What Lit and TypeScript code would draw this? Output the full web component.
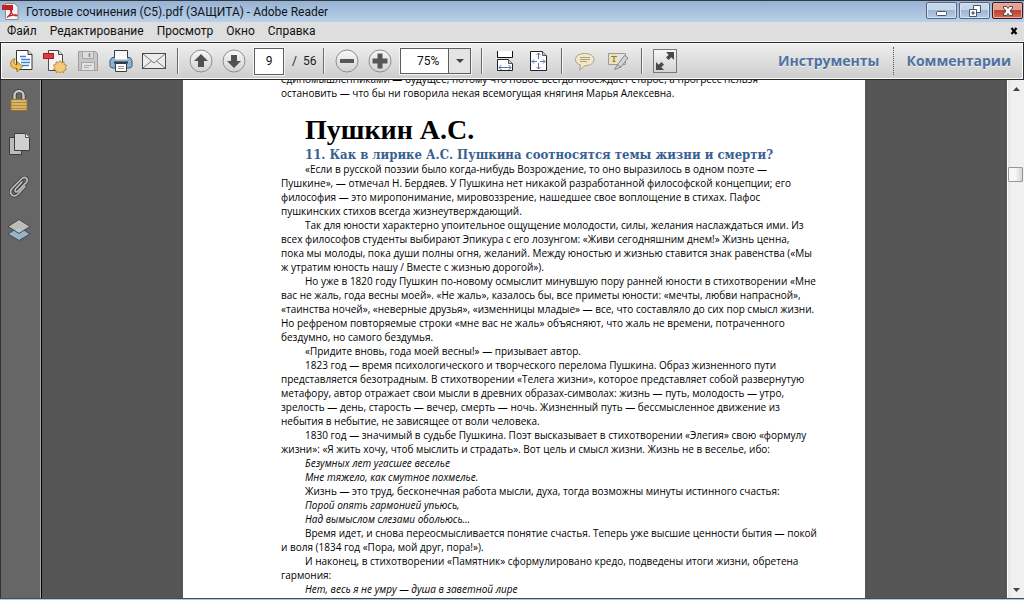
import { LitElement, html, css, svg } from "lit";
import { customElement, property, state } from "lit/decorators.js";

type Block = { verse?: boolean; cont?: boolean; lines: string[] };

const MENUS = ["Файл", "Редактирование", "Просмотр", "Окно", "Справка"];

const INTRO: Block = {
  cont: true,
  lines: [
    "единомышленниками — будущее, потому что новое всегда побеждает старое, а прогресс нельзя",
    "остановить — что бы ни говорила некая всемогущая княгиня Марья Алексевна.",
  ],
};

const BLOCKS: Block[] = [
  { lines: [
    "«Если в русской поэзии было когда-нибудь Возрождение, то оно выразилось в одном поэте —",
    "Пушкине», — отмечал Н. Бердяев. У Пушкина нет никакой разработанной философской концепции; его",
    "философия — это миропонимание, мировоззрение, нашедшее свое воплощение в стихах. Пафос",
    "пушкинских стихов всегда жизнеутверждающий.",
  ] },
  { lines: [
    "Так для юности характерно упоительное ощущение молодости, силы, желания наслаждаться ими. Из",
    "всех философов студенты выбирают Эпикура с его лозунгом: «Живи сегодняшним днем!» Жизнь ценна,",
    "пока мы молоды, пока души полны огня, желаний. Между юностью и жизнью ставится знак равенства («Мы",
    "ж утратим юность нашу / Вместе с жизнью дорогой»).",
  ] },
  { lines: [
    "Но уже в 1820 году Пушкин по-новому осмыслит минувшую пору ранней юности в стихотворении «Мне",
    "вас не жаль, года весны моей». «Не жаль», казалось бы, все приметы юности: «мечты, любви напрасной»,",
    "«таинства ночей», «неверные друзья», «изменницы младые» — все, что составляло до сих пор смысл жизни.",
    "Но рефреном повторяемые строки «мне вас не жаль» объясняют, что жаль не времени, потраченного",
    "бездумно, но самого бездумья.",
  ] },
  { lines: ["«Придите вновь, года моей весны!» — призывает автор."] },
  { lines: [
    "1823 год — время психологического и творческого перелома Пушкина. Образ жизненного пути",
    "представляется безотрадным. В стихотворении «Телега жизни», которое представляет собой развернутую",
    "метафору, автор отражает свои мысли в древних образах-символах: жизнь — путь, молодость — утро,",
    "зрелость — день, старость — вечер, смерть — ночь. Жизненный путь — бессмысленное движение из",
    "небытия в небытие, не зависящее от воли человека.",
  ] },
  { lines: [
    "1830 год — значимый в судьбе Пушкина. Поэт высказывает в стихотворении «Элегия» свою «формулу",
    "жизни»: «Я жить хочу, чтоб мыслить и страдать». Вот цель и смысл жизни. Жизнь не в веселье, ибо:",
  ] },
  { verse: true, lines: ["Безумных лет угасшее веселье"] },
  { verse: true, lines: ["Мне тяжело, как смутное похмелье."] },
  { lines: ["Жизнь — это труд, бесконечная работа мысли, духа, тогда возможны минуты истинного счастья:"] },
  { verse: true, lines: ["Порой опять гармонией упьюсь,"] },
  { verse: true, lines: ["Над вымыслом слезами обольюсь…"] },
  { lines: [
    "Время идет, и снова переосмысливается понятие счастья. Теперь уже высшие ценности бытия — покой",
    "и воля (1834 год «Пора, мой друг, пора!»).",
  ] },
  { lines: [
    "И наконец, в стихотворении «Памятник» сформулировано кредо, подведены итоги жизни, обретена",
    "гармония:",
  ] },
  { verse: true, lines: ["Нет, весь я не умру — душа в заветной лире"] },
];

const lines = (b: Block) => b.lines.map((l, i) => (i ? html`<br />${l}` : l));

const roundButton = (glyph: unknown) => svg`
  <circle cx="12" cy="12" r="11" fill="url(#disc)" stroke="#8d8d8d" />
  ${glyph}`;

const ICONS: Record<string, unknown> = {
  open: svg`
    <path d="M6.500 1.500h11.500l4 4v15h-15.500z" fill="#fff" stroke="#33363b" />
    <path d="M18 1.500v4h4" fill="#ddd" stroke="#33363b" />
    <path d="M10 7.500h6M11 10.500h9M11 13.500h9M12 16.500h7" stroke="#3c82d2" stroke-width="1.500" />
    <path d="M5 9.500C-1.500 11 -1 20 7 19.500v3.500l6-5.500-6-5v3.500C4 16 3 13 5 9.500z" fill="#f0c25a" stroke="#9a6f1e" stroke-width=".8" />`,
  create: svg`
    <path d="M5.500 1.500h10l4 4v16h-14z" fill="#f4f4f4" stroke="#4a4a4a" />
    <path d="M15.500 1.500v4h4" fill="#ddd" stroke="#4a4a4a" />
    <rect x=".500" y="4.500" width="10" height="5" fill="#dd3a40" stroke="#a51d22" />
    <path d="M17 11.500l1.500 2.300 2.500-1 .2 2.700 2.500.8-1.500 2.200 1.500 2-2.600.6-.3 2.500-2.400-.9-1.400 1.700-1.600-1.700-2.400.9-.2-2.500-2.500-.7 1.500-2-1.500-2.200 2.500-.8.300-2.600 2.400.8z" fill="#f3cb77" stroke="#a97c2b" stroke-width=".8" />`,
  save: svg`
    <path d="M2.500 2.500h17l2 2v17h-19z" fill="#c6c6c6" stroke="#9b9b9b" />
    <path d="M6.500 2.500h11v7h-11z" fill="#dedede" stroke="#a5a5a5" />
    <path d="M13.500 4v4" stroke="#999" stroke-width="2" />
    <path d="M5.500 13.500h13v8h-13z" fill="#e4e4e4" stroke="#a5a5a5" />
    <path d="M8 16.500h8M8 18.500h5" stroke="#aaa" />`,
  print: svg`
    <path d="M5.500 1.500h13v9h-13z" fill="#f6f6f6" stroke="#3c3c3c" />
    <path d="M3 8.500h18l2 3v6l-2 1.500H3L1 17.500v-6z" fill="#8fb4d2" stroke="#3d566c" />
    <path d="M6 7h12v3.500H6z" fill="#fff" />
    <path d="M5 13.500h14" stroke="#2b3a47" stroke-width="2" />
    <path d="M6.500 14.500h11v8h-11z" fill="#fff" stroke="#3c3c3c" />
    <path d="M9 17.500h6M9 19.500h6" stroke="#999" />`,
  mail: svg`
    <rect x=".500" y="4.500" width="23" height="15" fill="#ececec" stroke="#4b4b4b" />
    <path d="M1 5l11 9L23 5M1 19l8.500-7M23 19l-8.500-7" fill="none" stroke="#7c7c7c" />`,
  up: roundButton(svg`<path d="M12 5l7 7h-4v6H9v-6H5z" fill="#515151" />`),
  down: roundButton(svg`<path d="M12 19l7-7h-4V6H9v6H5z" fill="#515151" />`),
  minus: roundButton(svg`<path d="M5 10h14v4H5z" fill="#575757" />`),
  plus: roundButton(svg`<path d="M4.500 9.500h5v-5h5v5h5v5h-5v5h-5v-5h-5z" fill="#575757" />`),
  width: svg`
    <path d="M4.500 2v6.500h15V2" fill="#fff" stroke="#111" />
    <path d="M4.500 10.500h11l4 4v7h-15z" fill="#fff" stroke="#222" />
    <path d="M15.500 10.500v4h4" fill="#ccc" stroke="#555" />
    <path d="M6 18.500h12M8.500 16l-2.500 2.500 2.500 2.500M15.500 16l2.500 2.500-2.500 2.500" fill="none" stroke="#5872b5" />`,
  page: svg`
    <path d="M4.500 2.500h12l4 4v15h-16z" fill="#fff" stroke="#222" />
    <path d="M16.500 2.500v4h4" fill="#ccc" stroke="#555" />
    <path d="M12.500 4v6M12.500 14v6M6 12.500h5M14 12.500h5M10.500 6l2-2 2 2M10.500 18l2 2 2-2M8 10.500l-2 2 2 2M17 10.500l2 2-2 2" fill="none" stroke="#5872b5" />`,
  note: svg`
    <path d="M11.500 4.500c6 0 9.500 2.600 9.500 6s-3.500 6-9 6.200L6.500 21l1-5C4 15 2.500 13 2.500 10.500c0-3.400 3.500-6 9-6z" fill="#f1e8c8" stroke="#a8a18a" />
    <path d="M7 8.500h10M7 10.500h10M7 12.500h7" stroke="#aaa07e" />`,
  mark: svg`
    <path d="M2.500 4.500h17v11h-17z" fill="#e2e2e2" stroke="#9a9a9a" />
    <path d="M3.500 5.500h8v9h-8z" fill="#f0e3ac" />
    <path d="M5 7.500h6M8 7v6M6.500 12.500h3" stroke="#857b56" stroke-width="1.200" />
    <path d="M8.500 20.500l3-5 7-9 3.500 2.500-7 9z" fill="#d3d3d3" stroke="#858585" />
    <path d="M11.500 15.500l3 2.500" stroke="#858585" />`,
  full: svg`
    <rect x=".500" y=".500" width="23" height="23" fill="url(#disc)" stroke="#777" />
    <path d="M13 3h8v8l-2.700-2.700L15.500 11 13 8.500l2.700-2.800zM11 21H3v-8l2.700 2.700L8.500 13l2.500 2.500-2.700 2.800z" fill="#4a4a4a" />`,
  lock: svg`
    <path d="M7.500 11V6.500a4.500 4.500 0 0 1 9 0V11" fill="none" stroke="#3a3a3a" stroke-width="4" />
    <path d="M7.500 11V6.500a4.500 4.500 0 0 1 9 0V11" fill="none" stroke="#c6c6c6" stroke-width="2.500" />
    <rect x="4" y="10.500" width="16" height="11" fill="#d9b566" stroke="#94702f" />
    <path d="M4.500 13.500h15M4.500 16.500h15M4.500 19.500h15" stroke="#b08a44" />`,
  pages: svg`
    <path d="M2.500 5.500h12v17h-12z" fill="#bcbcbc" stroke="#3d3d3d" />
    <path d="M7.500 1.500h11l4 4v13h-15z" fill="#d0d0d0" stroke="#3d3d3d" />
    <path d="M18.500 1.500v4h4" fill="#eee" stroke="#555" />`,
  clip: svg`
    <g fill="none" stroke-linecap="round">
      <path d="M15 7l-6.500 7c-1.500 2 .8 4 2.500 2.200l8.500-9c2.500-3.200-1.500-6.500-4.500-3.700L5 13.500c-4 5 1.500 10 6 5.500l7-7.500" stroke="#3c3c3c" stroke-width="3.200" />
      <path d="M15 7l-6.500 7c-1.500 2 .8 4 2.500 2.200l8.500-9c2.500-3.200-1.500-6.500-4.500-3.700L5 13.500c-4 5 1.500 10 6 5.500l7-7.500" stroke="#bdbdbd" stroke-width="1.700" />
    </g>`,
  layers: svg`
    <path d="M12 9l11 7-11 6.500L1 16z" fill="#9ab4c8" stroke="#3f4a52" />
    <path d="M12 1.500l11 7-11 7-11-7z" fill="#c2c6c8" fill-opacity=".9" stroke="#454545" />`,
};

@customElement("ui-icon")
export class UiIcon extends LitElement {
  static styles = css`
    :host { display: block; width: 24px; height: 24px; }
    svg { display: block; width: 100%; height: 100%; }
  `;
  @property() name = "";
  render() {
    return html`<svg viewBox="0 0 24 24" aria-hidden="true">
      <defs>
        <linearGradient id="disc" x1="0" y1="0" x2="0" y2="1">
          <stop offset="0" stop-color="#f8f8f8" />
          <stop offset="1" stop-color="#d2d2d2" />
        </linearGradient>
      </defs>
      ${ICONS[this.name]}
    </svg>`;
  }
}

@customElement("title-bar")
export class TitleBar extends LitElement {
  static styles = css`
    :host {
      display: flex; align-items: center; height: 22px; box-sizing: border-box;
      border-top: 1px solid #34373c; padding: 0 1px 0 2px; gap: 7px;
      background: linear-gradient(#97b2d2, #b9d1ea);
      color: #10141a; font: 12px/16px Roboto, "Open Sans", sans-serif;
    }
    .logo { width: 17px; height: 17px; flex: none; }
    .title { flex: 1; font: inherit; margin: 0; white-space: nowrap; overflow: hidden; }
    .controls { display: flex; gap: 2px; align-self: flex-start; padding-top: 1px; }
    .ctl {
      width: 31px; height: 17px; padding: 0; border: 1px solid #56657c; border-radius: 2px;
      background: linear-gradient(#c5d7ea 45%, #9fb6d2 50%, #b7cce3);
      box-shadow: inset 0 0 0 1px #d5e3f2; display: grid; place-items: center;
    }
    .close {
      border-color: #43141b; background: linear-gradient(#e3a294 45%, #bf4330 50%, #cf6a50);
      box-shadow: inset 0 0 0 1px #e8afa4;
    }
    .ctl svg { width: 14px; height: 12px; display: block; }
  `;
  render() {
    return html`
      <svg class="logo" viewBox="0 0 17 17" aria-hidden="true">
        <path d="M3.500.500h9l3.500 3.500v12.500H3.500z" fill="#f4f4f4" stroke="#8b8b8b" />
        <rect x="0" y="2" width="11" height="5" fill="#c81f26" />
        <path d="M5 14.500c3-2 5-6 4.500-7.500s-1.500 0-.5 2 3.500 4 5.500 3.700-2-2-8.500.8" fill="none" stroke="#c81f26" stroke-width="1.300" />
      </svg>
      <h1 class="title">Готовые сочинения (С5).pdf (ЗАЩИТА) - Adobe Reader</h1>
      <div class="controls">
        <button class="ctl" aria-label="Свернуть">
          <svg viewBox="0 0 14 12"><rect x="1.500" y="6.500" width="10" height="4" rx="1" fill="#fff" stroke="#4a5568" /></svg>
        </button>
        <button class="ctl" aria-label="Восстановить">
          <svg viewBox="0 0 14 12" fill="#fff" stroke="#4a5568">
            <path d="M5.500.500h7v7h-7z" /><path d="M1.500 4.500h7v7h-7z" /><path d="M4 7h2v2h-2z" fill="#9fb6d2" />
          </svg>
        </button>
        <button class="ctl close" aria-label="Закрыть">
          <svg viewBox="0 0 14 12"><path d="M2.500 1.500h3L7 3.500l1.500-2h3v1.500L9 6l2.500 3v1.500h-3L7 8.500l-1.500 2h-3V9L5 6 2.500 3z" fill="#fff" stroke="#54414d" /></svg>
        </button>
      </div>`;
  }
}

@customElement("menu-bar")
export class MenuBar extends LitElement {
  static styles = css`
    :host {
      display: flex; align-items: center; height: 20px; box-sizing: border-box;
      padding: 0 6px 2px 7px; gap: 13px; background: #dedede; border-bottom: 1px solid #f6f6f6;
    }
    .item {
      border: 0; padding: 0; background: none; color: #111; white-space: nowrap;
      font: 12px/16px Roboto, "Open Sans", sans-serif;
    }
    .x { margin-left: auto; border: 0; padding: 0; background: none; display: block; }
    .x svg { display: block; width: 8px; height: 8px; }
  `;
  render() {
    return html`${MENUS.map((m) => html`<button class="item">${m}</button>`)}
      <button class="x" aria-label="Закрыть документ">
        <svg viewBox="0 0 8 8"><path d="M1.500 1l5 6M6.500 1l-5 6" stroke="#000" stroke-width="2.200" /></svg>
      </button>`;
  }
}

@customElement("tool-bar")
export class ToolBar extends LitElement {
  static styles = css`
    :host {
      display: flex; align-items: center; height: 38px; box-sizing: border-box;
      border: 1px solid #29292c; padding: 0 4px; background: linear-gradient(#efefef, #cdcdcd);
      box-shadow: inset 0 0 0 1px #fbfbfb; color: #1c1c1c;
      font: 12px/16px Roboto, "Open Sans", sans-serif;
    }
    .group { display: flex; align-items: center; flex: none; }
    .tool { width: 33px; height: 30px; border: 0; padding: 0; background: none; display: grid; place-items: center; }
    .sep { width: 1px; height: 26px; background: #6c6c6c; box-shadow: 1px 0 #f4f4f4; margin: 0 6px 0 7px; flex: none; }
    .page {
      width: 30px; height: 27px; box-sizing: border-box; border: 1px solid #5d5d5d; padding: 0;
      margin-left: 4px; background: #fff; text-align: center; font: inherit; color: #111;
      box-shadow: 0 0 0 1px #f5f5f5;
    }
    .total { width: 24px; margin-left: 8px; white-space: pre; }
    .zoom { position: relative; margin: 0 3px 0 4px; }
    .zoom select {
      appearance: none; display: block; width: 71px; height: 26px; box-sizing: border-box;
      border: 1px solid #5d5d5d; border-radius: 0; padding: 0 0 0 16px; font: inherit; color: #111;
      background: linear-gradient(90deg, #fff 47px, #5d5d5d 47px, #5d5d5d 48px, #e4e4e4 48px);
      box-shadow: 0 0 0 1px #f5f5f5;
    }
    .arrow {
      position: absolute; right: 7px; top: 11px; pointer-events: none;
      border: 4px solid transparent; border-top-color: #444; border-bottom: 0;
    }
    .panels { display: flex; align-items: center; margin-left: auto; padding-right: 8px; }
    .panel {
      border: 0; padding: 0; background: none; color: #4f71a1; white-space: nowrap;
      font: 700 14px/24px "Open Sans", "Noto Sans", sans-serif; text-shadow: 0 1px #f2f2f2;
    }
    .dots { height: 28px; border-left: 1px dotted #555; margin: 0 13px; }
  `;
  @state() page = 9;
  tool(name: string, label: string) {
    return html`<button class="tool" aria-label=${label}><ui-icon name=${name}></ui-icon></button>`;
  }
  render() {
    return html`
      <div class="group">
        ${this.tool("open", "Открыть")}${this.tool("create", "Создать PDF")}${this.tool("save", "Сохранить")}
        ${this.tool("print", "Печать")}${this.tool("mail", "Отправить")}
      </div>
      <span class="sep"></span>
      <div class="group">
        ${this.tool("up", "Предыдущая страница")}${this.tool("down", "Следующая страница")}
        <input class="page" aria-label="Номер страницы" .value=${String(this.page)} />
        <span class="total">/  56</span>
      </div>
      <span class="sep"></span>
      <div class="group">
        ${this.tool("minus", "Уменьшить")}${this.tool("plus", "Увеличить")}
        <div class="zoom">
          <select aria-label="Масштаб"><option>50%</option><option selected>75%</option><option>100%</option></select>
          <span class="arrow"></span>
        </div>
      </div>
      <span class="sep"></span>
      <div class="group">${this.tool("width", "По ширине")}${this.tool("page", "Страница целиком")}</div>
      <span class="sep"></span>
      <div class="group">${this.tool("note", "Заметка")}${this.tool("mark", "Выделение текста")}</div>
      <span class="sep"></span>
      <div class="group">${this.tool("full", "Режим чтения")}</div>
      <div class="panels">
        <button class="panel">Инструменты</button>
        <span class="dots"></span>
        <button class="panel">Комментарии</button>
      </div>`;
  }
}

@customElement("nav-rail")
export class NavRail extends LitElement {
  static styles = css`
    :host {
      display: flex; flex-direction: column; gap: 19px; flex: none; width: 42px; box-sizing: border-box;
      padding: 9px 0 0 6px; background: #666; border-left: 1px solid #333; border-right: 1px solid #000;
      box-shadow: inset -1px 0 #aaa;
    }
    .tab { width: 24px; height: 24px; border: 0; padding: 0; background: none; }
  `;
  render() {
    return html`
      <button class="tab" aria-label="Защита"><ui-icon name="lock"></ui-icon></button>
      <button class="tab" aria-label="Миниатюры страниц"><ui-icon name="pages"></ui-icon></button>
      <button class="tab" aria-label="Вложения"><ui-icon name="clip"></ui-icon></button>
      <button class="tab" aria-label="Слои"><ui-icon name="layers"></ui-icon></button>`;
  }
}

@customElement("pdf-page")
export class PdfPage extends LitElement {
  static styles = css`
    :host {
      display: flex; flex-direction: column; justify-content: flex-start; width: 682px; max-width: 100%;
      box-sizing: border-box; padding: 0 40px 0 98px; background: #fff; color: #000; overflow: hidden;
      font: 500 10px/14px "Open Sans", "Noto Sans", sans-serif;
    }
    .para { margin: 0; text-indent: 24px; white-space: nowrap; }
    .cont { text-indent: 0; margin-top: -8px; }
    .verse { font-style: italic; }
    .author { margin: 12px 0 0; padding-left: 24px; font: 700 28px/35px "Liberation Serif", serif; }
    .theme { margin: 0; padding-left: 24px; white-space: nowrap; color: #376092; font: 700 13px/15px "DejaVu Serif Condensed", "DejaVu Serif", serif; }
  `;
  render() {
    return html`
      <p class="para cont">${lines(INTRO)}</p>
      <h2 class="author">Пушкин А.С.</h2>
      <h3 class="theme">11. Как в лирике А.С. Пушкина соотносятся темы жизни и смерти?</h3>
      ${BLOCKS.map((b) => html`<p class="para ${b.verse ? "verse" : ""}">${lines(b)}</p>`)}`;
  }
}

@customElement("scroll-bar")
export class ScrollBar extends LitElement {
  static styles = css`
    :host {
      display: flex; flex-direction: column; justify-content: space-between; align-items: center;
      flex: none; width: 17px; box-sizing: border-box; border-left: 1px solid #fff;
      background: linear-gradient(90deg, #e4e4e4, #f0f0f0 4px); position: relative;
    }
    .btn { width: 16px; height: 17px; border: 0; padding: 0; background: none; display: grid; place-items: center; }
    .btn svg { width: 7px; height: 4px; display: block; }
    .thumb {
      position: absolute; top: 87px; left: 0; width: 15px; height: 15px; box-sizing: border-box;
      border: 1px solid #979797; border-radius: 1px; background: linear-gradient(90deg, #f6f6f6 50%, #d2d4d8);
    }
  `;
  render() {
    return html`
      <button class="btn" aria-label="Вверх"><svg viewBox="0 0 7 4"><path d="M0 4L3.500 0 7 4z" fill="#444" /></svg></button>
      <span class="thumb"></span>
      <button class="btn" aria-label="Вниз"><svg viewBox="0 0 7 4"><path d="M0 0L3.500 4 7 0z" fill="#444" /></svg></button>`;
  }
}

@customElement("app-root")
export class AppRoot extends LitElement {
  static styles = css`
    :host { display: flex; flex-direction: column; height: 100vh; overflow: hidden; background: #c3d6ea; }
    .work { flex: 1; min-height: 0; display: flex; }
    .desk {
      flex: 1; min-width: 0; display: flex; justify-content: center; overflow: hidden;
      background: #555; padding-right: 1px;
    }
    .edge { height: 2px; background: linear-gradient(#3e4b59 50%, #b4c8dc 50%); flex: none; }
  `;
  render() {
    return html`
      <title-bar></title-bar>
      <menu-bar></menu-bar>
      <tool-bar></tool-bar>
      <main class="work">
        <nav-rail></nav-rail>
        <div class="desk"><pdf-page></pdf-page></div>
        <scroll-bar></scroll-bar>
      </main>
      <div class="edge"></div>`;
  }
}
